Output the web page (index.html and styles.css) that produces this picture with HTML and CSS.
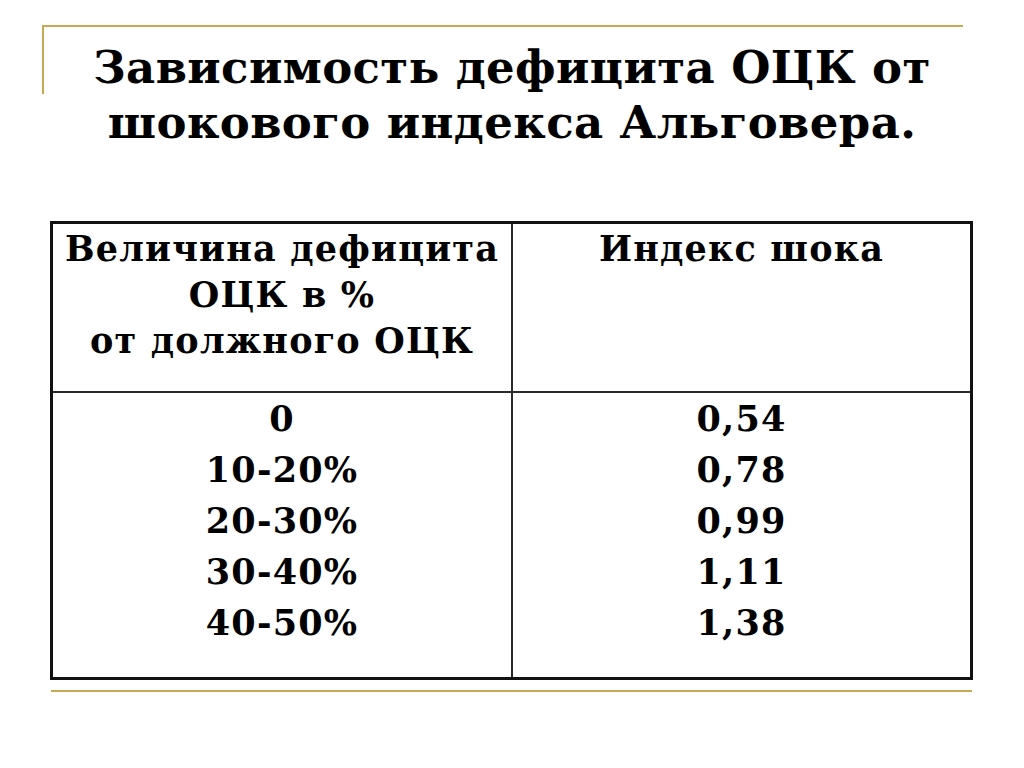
FILE: index.html
```html
<!DOCTYPE html>
<html lang="ru">
<head>
<meta charset="utf-8">
<title>Зависимость дефицита ОЦК от шокового индекса Альговера</title>
<link rel="stylesheet" href="styles.css">
</head>
<body>
<div class="slide">
  <div class="frame">
    <div class="frame-bar"></div>
    <h1 class="title">Зависимость дефицита ОЦК от<br>шокового индекса Альговера.</h1>
  </div>
  <div class="table">
    <div class="cell head left">Величина дефицита<br>ОЦК в %<br>от должного ОЦК</div>
    <div class="cell head right">Индекс шока</div>
    <div class="cell data left">0<br>10-20%<br>20-30%<br>30-40%<br>40-50%</div>
    <div class="cell data right">0,54<br>0,78<br>0,99<br>1,11<br>1,38</div>
  </div>
  <div class="bottom-rule"></div>
</div>
</body>
</html>
```

FILE: styles.css
```css
html, body {
  margin: 0;
  padding: 0;
  background: #ffffff;
}

.slide {
  width: 1024px;
  height: 768px;
  overflow: hidden;
  background: #ffffff;
  font-family: "DejaVu Serif", "Liberation Serif", serif;
  font-weight: bold;
  color: #000000;
  padding-top: 25px;
  box-sizing: border-box;
}

.frame {
  display: flex;
  margin: 0 61px 0 42px;
  border-top: 2px solid #c9a94f;
}

.frame-bar {
  flex: none;
  width: 2px;
  height: 67px;
  background: #c9a94f;
}

.title {
  flex: 1;
  margin: 13px 0 0 0;
  padding-left: 17px;
  text-align: center;
  font-size: 45px;
  letter-spacing: 0.4px;
  line-height: 55px;
  font-weight: bold;
}

.table {
  display: grid;
  grid-template-columns: 460px 457px;
  grid-template-rows: 169px 284px;
  width: 923px;
  box-sizing: border-box;
  margin: 71px 0 0 50px;
  border: 3px solid #111111;
}

.cell {
  box-sizing: border-box;
  text-align: center;
  font-size: 35px;
  letter-spacing: 1.2px;
}

.cell.left {
  border-right: 2px solid #2a2a2a;
}

.cell.head {
  border-bottom: 2px solid #2a2a2a;
  padding-top: 2px;
  line-height: 46px;
}

.cell.data {
  padding-top: 0;
  line-height: 51px;
}

.bottom-rule {
  margin: 10px 0 0 51px;
  width: 921px;
  height: 2px;
  background: #c9a94f;
}
```
